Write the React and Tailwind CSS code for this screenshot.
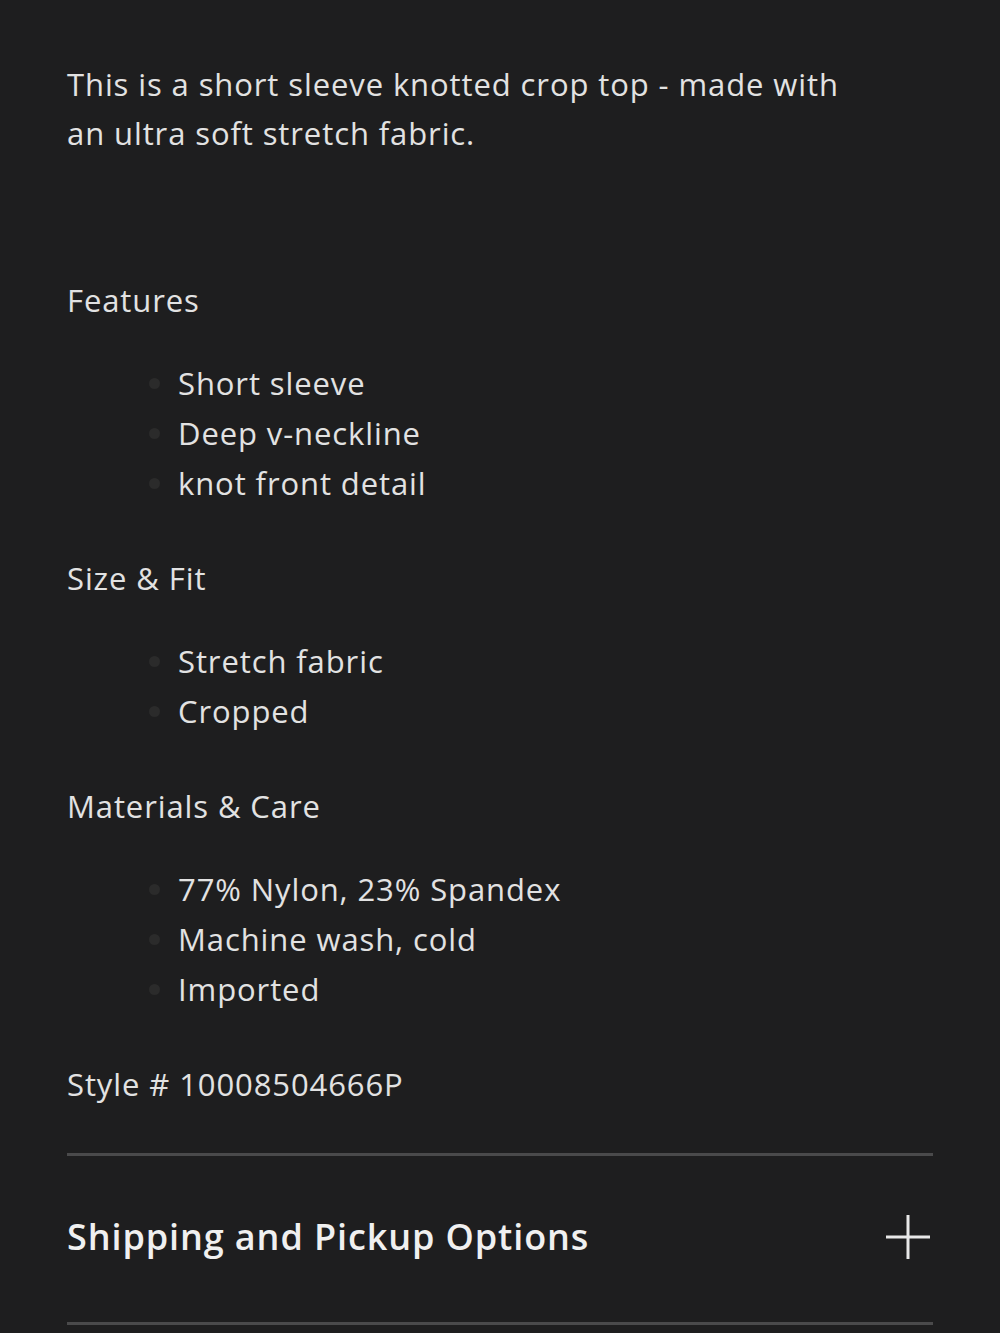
import React from 'react';

const sections = [
  { title: 'Features', items: ['Short sleeve', 'Deep v-neckline', 'knot front detail'] },
  { title: 'Size & Fit', items: ['Stretch fabric', 'Cropped'] },
  { title: 'Materials & Care', items: ['77% Nylon, 23% Spandex', 'Machine wash, cold', 'Imported'] },
];

const Section = ({ title, items }) => (
  <div className="mb-[45px]">
    <h3 className="h-[50px] leading-[50px]">{title}</h3>
    <ul className="mt-[33px] pl-[111px] list-disc marker:text-[#2b2b2b]">
      {items.map((item) => (
        <li key={item} className="h-[50px] leading-[50px]">{item}</li>
      ))}
    </ul>
  </div>
);

export default function App() {
  return (
    <div
      className="min-h-[1333px] bg-[#1e1e1f] text-[#e2e2e2] text-[31px] tracking-[0.9px] px-[67px] overflow-hidden"
      style={{ fontFamily: '"Open Sans", Lato, sans-serif' }}
    >
      <p className="pt-[60px] leading-[49px] max-w-[800px]">
        This is a short sleeve knotted crop top - made with an ultra soft stretch fabric.
      </p>

      <div className="mt-[117px]">
        {sections.map((s) => (
          <Section key={s.title} {...s} />
        ))}
      </div>

      <div className="h-[50px] leading-[50px]">Style # 10008504666P</div>

      <div className="mt-[44px] border-t-[3px] border-[#4a4a4b]" />
      <button className="w-full h-[166px] flex items-center justify-between text-left">
        <span className="text-[36px] font-semibold tracking-[0.9px] text-[#f0f0f0] -mt-[4px]">
          Shipping and Pickup Options
        </span>
        <svg width="48" height="48" viewBox="0 0 48 48" className="mr-[1px] -mt-[4px]">
          <path d="M24 2v44M2 24h44" stroke="#e8e8e8" strokeWidth="3" />
        </svg>
      </button>
      <div className="border-t-[3px] border-[#4a4a4b]" />
    </div>
  );
}
